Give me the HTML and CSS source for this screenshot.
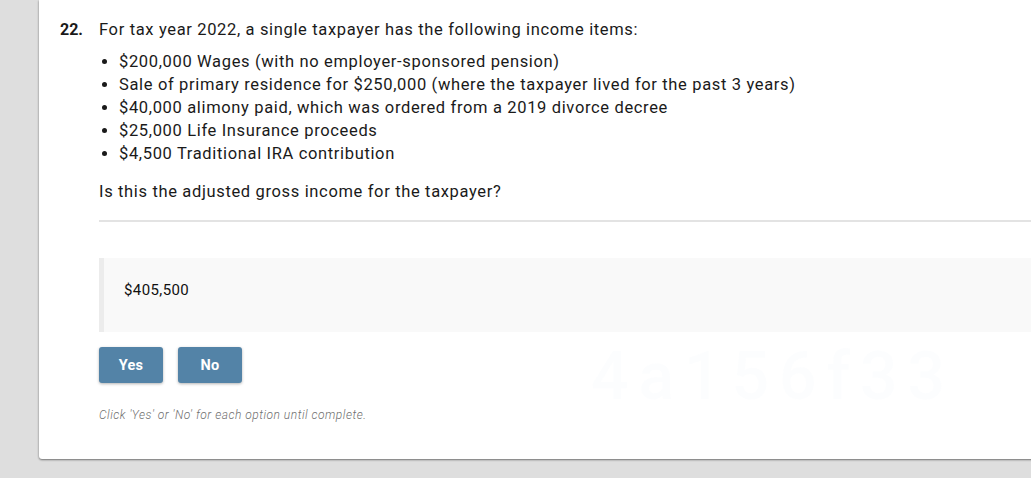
FILE: index.html
```html
<!DOCTYPE html>
<html lang="en">
<head>
<meta charset="utf-8">
<title>Question 22</title>
<link rel="stylesheet" href="styles.css">
</head>
<body>
<div class="page">
  <div class="card">
    <div class="watermark" aria-hidden="true">4a156f33</div>
    <div class="question">
      <div class="qnum">22.</div>
      <div class="qbody">
        <p class="stem">For tax year 2022, a single taxpayer has the following income items:</p>
        <ul class="items">
          <li>$200,000 Wages (with no employer-sponsored pension)</li>
          <li>Sale of primary residence for $250,000 (where the taxpayer lived for the past 3 years)</li>
          <li>$40,000 alimony paid, which was ordered from a 2019 divorce decree</li>
          <li>$25,000 Life Insurance proceeds</li>
          <li>$4,500 Traditional IRA contribution</li>
        </ul>
        <p class="ask">Is this the adjusted gross income for the taxpayer?</p>
        <hr class="rule">
        <div class="option">$405,500</div>
        <div class="buttons">
          <button class="btn">Yes</button>
          <button class="btn">No</button>
        </div>
        <p class="hint">Click 'Yes' or 'No' for each option until complete.</p>
      </div>
    </div>
  </div>
</div>
</body>
</html>
```

FILE: styles.css
```css
html, body {
  margin: 0;
  padding: 0;
  height: 100%;
  overflow: hidden;
  background: #dedede;
}

.page {
  padding-left: 39px;
  font-family: Roboto, "Liberation Sans", Arial, sans-serif;
  color: #1a1a1a;
}

.card {
  position: relative;
  background: #fff;
  height: 459px;
  margin-right: -40px;
  border-radius: 0 0 0 3px;
  box-shadow: 0 1px 2px rgba(0, 0, 0, 0.45), 0 0 3px rgba(0, 0, 0, 0.12);
  box-sizing: border-box;
  overflow: hidden;
}

.watermark {
  position: absolute;
  left: 552px;
  top: 338px;
  font-size: 66px;
  font-weight: 500;
  letter-spacing: 10px;
  color: rgba(200, 214, 235, 0.06);
  pointer-events: none;
}

.question {
  display: flex;
  padding: 18px 0 0 21px;
}

.qnum {
  width: 39px;
  flex: none;
  font-size: 16px;
  line-height: 23px;
  font-weight: 700;
  color: #1a1a1a;
}

.qbody {
  flex: 1;
  font-size: 16.5px;
  letter-spacing: 0.65px;
  line-height: 23px;
}

.stem {
  margin: 0;
}

.items {
  margin: 9px 0 0;
  padding-left: 20px;
}

.ask {
  margin: 15px 0 0;
}

.rule {
  margin: 17px 0 0;
  border: 0;
  height: 2px;
  background: #e3e3e3;
}

.option {
  margin-top: 36px;
  background: #f9f9f9;
  border-left: 5px solid #ececec;
  padding: 22px 0 32px 20px;
  font-size: 15px;
  letter-spacing: 0.4px;
  line-height: 20px;
  color: #111;
}

.buttons {
  display: flex;
  gap: 15px;
  margin-top: 15px;
}

.btn {
  width: 64px;
  height: 36px;
  border: 0;
  border-radius: 3px;
  background: #5383a7;
  color: #fff;
  font-family: Roboto, "Liberation Sans", Arial, sans-serif;
  font-size: 14.5px;
  font-weight: 700;
  letter-spacing: 0.3px;
  padding: 0;
  box-shadow: 0 1px 3px rgba(0, 0, 0, 0.3);
}

.hint {
  margin: 25px 0 0;
  font-size: 12px;
  line-height: 14px;
  letter-spacing: 0.5px;
  font-style: italic;
  font-weight: 300;
  color: #6f6f6f;
}
```
